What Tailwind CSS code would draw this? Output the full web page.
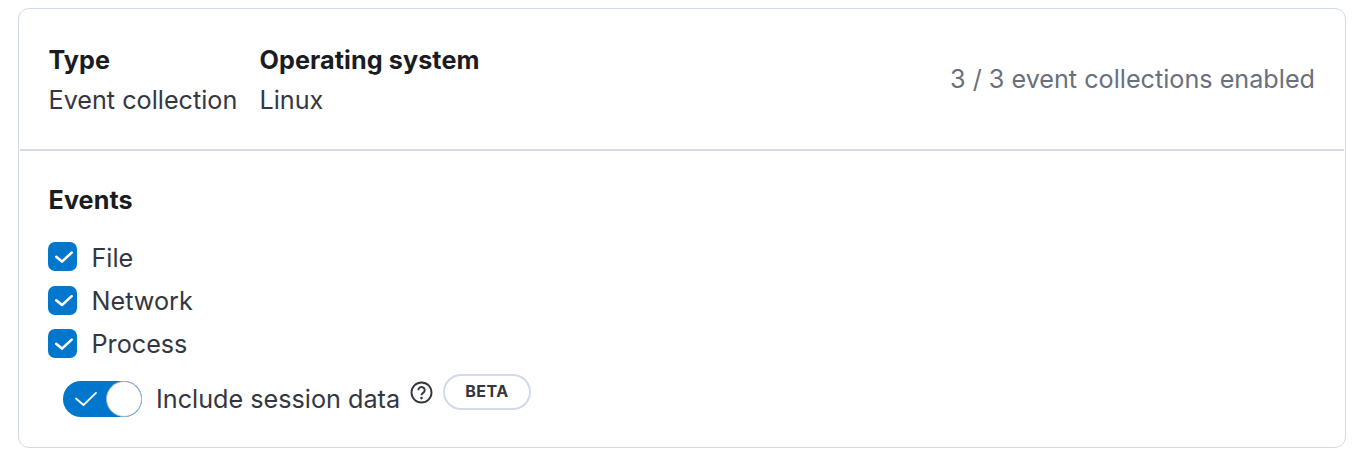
<!DOCTYPE html>
<html lang="en">

<head>
    <meta charset="utf-8" />
    <title>Event collection</title>
    <meta name="viewport" content="width=device-width, initial-scale=1.0" />
    <script src="https://cdn.jsdelivr.net/npm/@tailwindcss/browser@4"></script>
</head>

<body class="h-screen overflow-hidden bg-white px-[18px] pt-2 font-['Inter',sans-serif] text-[25.2px] text-[#343741]">
    <div class="h-[440px] w-[1328px] rounded-[11px] border border-[#d3dae6] px-px">
        <div class="flex h-[142px] items-center border-b-2 border-[#d3dae6] pr-[29px] pl-[28.5px]">
            <div class="w-[211px] shrink-0 pt-0.5">
                <h2 class="leading-10 font-bold tracking-[0.08px] text-[#1a1c21]">Type</h2>
                <p class="leading-10">Event collection</p>
            </div>
            <div class="grow pt-0.5">
                <h2 class="leading-10 font-bold tracking-[0.08px] text-[#1a1c21]">Operating system</h2>
                <p class="leading-10">Linux</p>
            </div>
            <p class="leading-10 text-[#69707d]">3 / 3 event collections enabled</p>
        </div>

        <div class="px-[28px] pt-[29px]">
            <h3 class="pl-[0.5px] leading-10 font-bold tracking-[0.08px] text-[#1a1c21]">Events</h3>
            <div class="mt-[15px] flex flex-col">
                <label class="flex h-[43px] items-center gap-[14.5px]">
                    <svg class="size-[29px] rounded-[7px] bg-[#0077cc]" viewBox="0 0 29 29" fill="none" stroke="#fff" stroke-width="2.6" stroke-linecap="round" stroke-linejoin="round"><path d="M8.2 14.8L14 19.6L23.7 10.6" /></svg>
                    <span class="pt-[4px]">File</span>
                </label>
                <label class="flex h-11 items-center gap-[14.5px]">
                    <svg class="size-[29px] rounded-[7px] bg-[#0077cc]" viewBox="0 0 29 29" fill="none" stroke="#fff" stroke-width="2.6" stroke-linecap="round" stroke-linejoin="round"><path d="M8.2 14.3L14 19.1L23.7 10.1" /></svg>
                    <span class="pt-[3px]">Network</span>
                </label>
                <label class="flex h-[43px] items-center gap-[14.5px]">
                    <svg class="size-[29px] rounded-[7px] bg-[#0077cc]" viewBox="0 0 29 29" fill="none" stroke="#fff" stroke-width="2.6" stroke-linecap="round" stroke-linejoin="round"><path d="M8.2 14.8L14 19.6L23.7 10.6" /></svg>
                    <span class="pt-0.5">Process</span>
                </label>
            </div>
            <div class="mt-2 flex items-start pl-[15px]">
                <div class="mt-2 flex h-9 w-[79px] items-center justify-between rounded-full bg-[#0077cc] pl-[11px]">
                    <svg class="h-4 w-6" viewBox="0 0 24 16" fill="none" stroke="#fff" stroke-width="1.8" stroke-linecap="round" stroke-linejoin="round"><path d="M2 7.5L9.5 14L22 1.8" /></svg>
                    <span class="size-9 rounded-full border border-[#9fb4d1] bg-white"></span>
                </div>
                <span class="mt-[6px] ml-[14px] w-[244px] leading-10 whitespace-nowrap">Include session data</span>
                <svg class="mt-[8px] ml-[10px] size-[23px]" viewBox="0 0 23 23" fill="none" stroke="#343741" stroke-width="1.9"><circle cx="11.5" cy="11.5" r="10" /><path d="M8.3 9.2a3.2 3.1 0 1 1 5 2.5c-1.1.8-1.8 1.2-1.8 2.6" /><circle cx="11.5" cy="17.1" r="1.3" fill="#343741" stroke="none" /></svg>
                <span class="ml-[10px] mt-px flex h-9 w-[88px] items-center justify-center rounded-full border-2 border-[#d3dae6] pb-0.5 text-base leading-none font-bold tracking-[0.5px]">BETA</span>
            </div>
        </div>
    </div>
</body>

</html>
